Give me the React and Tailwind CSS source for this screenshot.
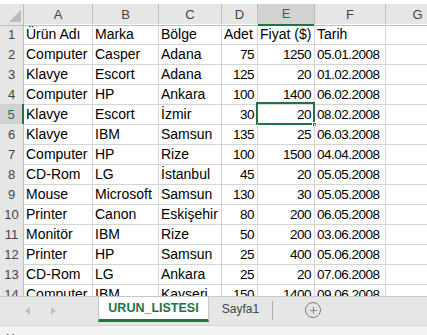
import { Plus } from 'lucide-react';

const cols = ['A', 'B', 'C', 'D', 'E', 'F', 'G'];

const rows = [
  ['Ürün Adı', 'Marka', 'Bölge', 'Adet', 'Fiyat ($)', 'Tarih'],
  ['Computer', 'Casper', 'Adana', 75, 1250, '05.01.2008'],
  ['Klavye', 'Escort', 'Adana', 125, 20, '01.02.2008'],
  ['Computer', 'HP', 'Ankara', 100, 1400, '06.02.2008'],
  ['Klavye', 'Escort', 'İzmir', 30, 20, '08.02.2008'],
  ['Klavye', 'IBM', 'Samsun', 135, 25, '06.03.2008'],
  ['Computer', 'HP', 'Rize', 100, 1500, '04.04.2008'],
  ['CD-Rom', 'LG', 'İstanbul', 45, 20, '05.05.2008'],
  ['Mouse', 'Microsoft', 'Samsun', 130, 30, '05.05.2008'],
  ['Printer', 'Canon', 'Eskişehir', 80, 200, '06.05.2008'],
  ['Monitör', 'IBM', 'Rize', 50, 200, '03.06.2008'],
  ['Printer', 'HP', 'Samsun', 25, 400, '05.06.2008'],
  ['CD-Rom', 'LG', 'Ankara', 25, 20, '07.06.2008'],
  ['Computer', 'IBM', 'Kayseri', 150, 1400, '09.06.2008'],
];

const gridCols = 'grid grid-cols-[24px_69px_66px_63px_36px_57px_71px_64px_1fr]';

function HeaderRow() {
  return (
    <div className={`${gridCols} h-5 bg-[#e6e6e6] text-[13px] text-[#444]`}>
      <div className="relative border-r border-b border-[#bdbdbd]">
        <svg className="absolute left-[9px] top-[6px]" width="12" height="12" viewBox="0 0 12 12">
          <polygon points="12,0 12,12 0,12" fill="#bcbcbc" />
        </svg>
      </div>
      {cols.map((c) => (
        <div
          key={c}
          className={
            c === 'E'
              ? 'flex items-center justify-center border-r border-b-2 border-r-[#bdbdbd] border-b-[#217346] bg-[#d2d2d2] text-[#217346]'
              : 'flex items-center justify-center border-r border-b border-[#bdbdbd]'
          }
        >
          {c}
        </div>
      ))}
      <div className="border-b border-[#bdbdbd]" />
    </div>
  );
}

function DataRow({ n, cells }) {
  const active = n === 5;
  return (
    <div className={`${gridCols} h-5 text-[14px] leading-[19px] text-black`}>
      <div
        className={
          active
            ? 'flex items-center justify-center border-b border-r-2 border-b-[#bdbdbd] border-r-[#217346] bg-[#d2d2d2] text-[13px] text-[#217346]'
            : 'flex items-center justify-center border-r border-b border-[#bdbdbd] bg-[#e6e6e6] text-[13px] text-[#444]'
        }
      >
        {n}
      </div>
      {cells.map((v, i) => {
        const num = typeof v === 'number';
        // dates and numbers are a touch narrower in the original font
        const digits = num || (i === 5 && n > 1);
        const sel = active && i === 4;
        return (
          <div
            key={i}
            className={`relative whitespace-nowrap border-r border-b border-[#d4d4d4] pt-px ${num ? 'pr-[3px] text-right' : 'pl-[2px]'} ${digits ? 'text-[13.5px] tracking-[-0.5px]' : ''}`}
          >
            {v}
            {sel && (
              <>
                <div className="absolute -top-[2px] -left-[2px] -right-px -bottom-px border-2 border-[#217346]" />
                <div className="absolute -right-[3px] -bottom-[3px] h-[5px] w-[5px] border border-white bg-[#217346]" />
              </>
            )}
          </div>
        );
      })}
      <div className="border-r border-b border-[#d4d4d4]" />
      <div className="border-b border-[#d4d4d4]" />
    </div>
  );
}

export default function App() {
  return (
    <div className="flex h-[335px] w-[427px] flex-col overflow-hidden bg-white font-['Liberation_Sans',Arial,sans-serif]">
      <div className="h-1 shrink-0" />
      <div className="h-[292px] shrink-0 overflow-hidden">
        <HeaderRow />
        {rows.map((r, i) => (
          <DataRow key={i} n={i + 1} cells={r} />
        ))}
      </div>

      <div className="flex h-[29px] shrink-0 items-start border-t border-[#c6c6c6] bg-[#e6e6e6]">
        <div className="flex w-[98px] items-center gap-[21px] pl-[25px] pt-[10px]">
          <svg width="5" height="8" viewBox="0 0 5 8">
            <polygon points="5,0 5,8 0,4" fill="#bfbfbf" />
          </svg>
          <svg width="5" height="8" viewBox="0 0 5 8">
            <polygon points="0,0 0,8 5,4" fill="#bfbfbf" />
          </svg>
        </div>
        <div className="-mt-px flex h-[26px] w-[111px] items-center justify-center border-x border-t border-[#c6c6c6] border-b-[3px] border-b-[#217346] bg-white text-[12.5px] font-bold text-[#217346]">
          URUN_LISTESI
        </div>
        <div className="flex h-[24px] w-[63px] items-center justify-center text-[12px] text-[#444]">
          Sayfa1
        </div>
        <div className="mt-[4px] h-[19px] w-px bg-[#ababab]" />
        <div className="ml-[32px] mt-[5px] flex h-4 w-4 items-center justify-center rounded-full border border-[#7a7a7a]">
          <Plus size={11} strokeWidth={2} color="#7a7a7a" />
        </div>
      </div>

      <div className="flex-1 border-t border-[#d4d4d4] bg-[#f3f3f3] pl-[6px] pt-[6px] text-[12px] leading-[14px] text-[#444]">
        Hazır
      </div>
    </div>
  );
}
